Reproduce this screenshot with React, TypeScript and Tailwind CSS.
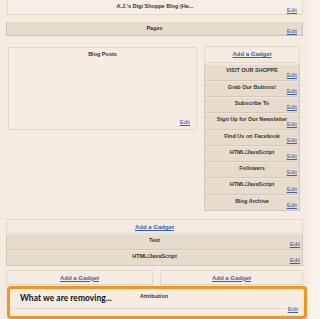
import React from "react";

const f = { fontFamily: '"Liberation Sans", Arial, sans-serif' };

function Edit({ className = "" }: { className?: string }) {
  return (
    <span
      className={`absolute text-[6px] leading-none text-[#3b5bc4] underline ${className}`}
      style={f}
    >
      Edit
    </span>
  );
}

function Gadget({ title, h = "h-[16.3px]" }: { title: string; h?: string }) {
  return (
    <div className={`relative ${h} bg-[#e7dccc] border border-[#d2c7b8] border-t-[#eee6da]`}>
      <div className="text-center text-[5.5px] font-bold text-[#333] leading-none pt-[3px]" style={f}>
        {title}
      </div>
      <Edit className="right-[2px] bottom-[2px]" />
    </div>
  );
}

function AddGadget({ className = "" }: { className?: string }) {
  return (
    <div className={`border border-dotted border-[#cfc5b8] flex justify-center ${className}`}>
      <span className="text-[6px] font-bold text-[#3b5bc4] underline leading-none pt-[4px]" style={f}>
        Add a Gadget
      </span>
    </div>
  );
}

export default function App() {
  const side = [
    "VISIT OUR SHOPPE",
    "Grab Our Buttons!",
    "Subscribe To",
    "Sign Up for Our Newsletter",
    "Find Us on Facebook",
    "HTML/JavaScript",
    "Followers",
    "HTML/JavaScript",
    "Blog Archive",
  ];
  return (
    <div className="w-[320px] h-[319px] overflow-hidden bg-[#f8f2ea] flex">
      <div className="w-[308px] h-[319px] bg-[#f4ebe1] flex flex-col">
        {/* header */}
        <div className="relative ml-[7px] w-[296px] h-[17px] mt-[-1px] border border-[#e2d8cb] bg-[#f5eee4]">
          <div className="text-center text-[5.5px] font-bold text-[#333] leading-none pt-[4px]" style={f}>
            A.J.'s Digi Shoppe Blog (He...
          </div>
          <Edit className="right-[5px] bottom-[1px]" />
        </div>
        {/* pages */}
        <div className="relative ml-[6px] mt-[7px] w-[297px] h-[16px] bg-[#e7dccb] border border-[#cdc2b3] border-t-[#e0d5c6]">
          <div className="text-center text-[5.5px] font-bold text-[#333] leading-none pt-[3px]" style={f}>
            Pages
          </div>
          <Edit className="right-[5px] bottom-[1px]" />
        </div>
        {/* main row */}
        <div className="flex mt-[10px]">
          <div className="relative ml-[8px] mt-[1px] w-[189px] h-[83px] border border-[#e2d9cd] bg-[#f5ece2]">
            <div className="text-center text-[5.5px] font-bold text-[#333] leading-none pt-[4px]" style={f}>
              Blog Posts
            </div>
            <Edit className="right-[6px] bottom-[4px]" />
          </div>
          <div className="ml-[7px] w-[96px] flex flex-col">
            <AddGadget className="h-[17px] mb-[1px]" />
            {side.map((s, i) => (
              <Gadget key={i} title={s} />
            ))}
          </div>
        </div>
        <AddGadget className="ml-[6px] w-[297px] h-[16px] mt-[8px]" />
        <div className="ml-[6px] w-[297px] flex flex-col">
          <Gadget title="Text" h="h-[16px]" />
          <Gadget title="HTML/JavaScript" h="h-[16px]" />
        </div>
        <div className="flex ml-[6px] mt-[4px] gap-[7px]">
          <AddGadget className="w-[147px] h-[15px]" />
          <AddGadget className="w-[143px] h-[15px]" />
        </div>
        {/* highlight */}
        <div className="relative ml-[7px] mt-[1px] w-[300px] h-[36px] border-[3.5px] border-[#f7941d] rounded-[4px] bg-[#f5ede3]">
          <div className="absolute left-[1px] right-[1px] top-[1px] h-[19px] border-b border-[#e5dbcd]" />
          <div className="relative flex items-start pt-[5px] pl-[10px]">
            <span className="text-[8.5px] font-bold text-[#111] leading-none" style={{ fontFamily: 'Lato, "Open Sans", Arial, sans-serif' }}>
              What we are removing...
            </span>
            <span className="absolute left-[130px] top-[5px] text-[5.5px] font-bold text-[#333] leading-none" style={f}>
              Attribution
            </span>
          </div>
          <Edit className="right-[6px] top-[17px]" />
        </div>
      </div>
    </div>
  );
}
